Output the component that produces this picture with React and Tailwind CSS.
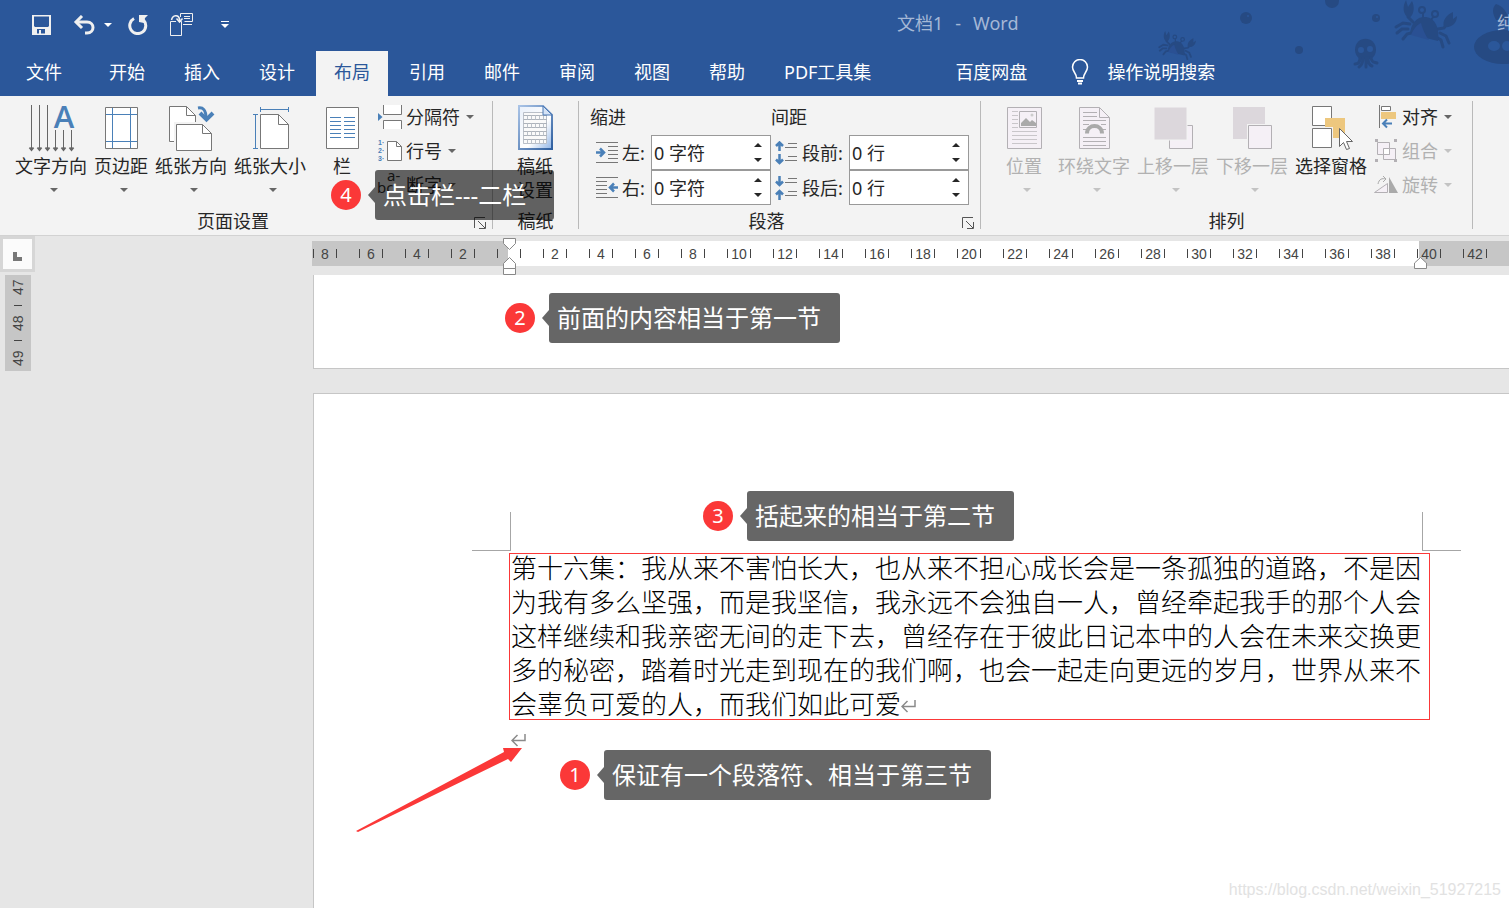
import React, { useState } from "react";

const TABS = [
  "开始",
  "插入",
  "设计",
  "布局",
  "引用",
  "邮件",
  "审阅",
  "视图",
  "帮助",
  "PDF工具集",
];

const RULER = [8, 6, 4, 2, 0];
for (let n = 2; n <= 42; n += 2) RULER.push(n);

const Caret = ({ className = "" }) => (
  <svg width="8" height="4" viewBox="0 0 8 4" className={className}>
    <path d="M0 0h8L4 4z" fill="currentColor" />
  </svg>
);

const Crab = ({ transform }) => (
  <g transform={transform}>
    <g fill="none" stroke="#264a83" strokeWidth="3" strokeLinecap="round">
      <path d="M16 24l-7-1-7 4M14 29l-6 0-5 4M17 33l-4 1-4 5" />
      <path d="M42 37l5 3 2 7M46 33l6 3 3 7M44 29l6-1 4-6M19 22l-5-5" />
      <path d="M29 18v-5M37 20l3-4" strokeWidth="2" />
    </g>
    <path d="M16 34c1-12 8-18 16-17 9 1 14 11 12 24z" fill="#264a83" />
    <path d="M17 35c3-7 6-10 10-12 2 7 4 12 8 17z" fill="#2a5093" />
    <path
      d="M15 18c-6-3-7-11-3-18l2 7 4-6c3 6 2 14-3 17zM50 27c-2-6 2-12 9-15l0 7 4-3c0 7-5 12-13 11z"
      fill="#264a83"
    />
    <circle cx="28" cy="10" r="3" fill="#2b579a" stroke="#264a83" strokeWidth="2" />
    <circle cx="41" cy="14" r="3" fill="#2b579a" stroke="#264a83" strokeWidth="2" />
  </g>
);

const SeaPattern = () => (
  <svg
    className="absolute right-0 top-0"
    width="360"
    height="96"
    viewBox="0 0 360 96"
    aria-hidden="true"
  >
    <g fill="#264a83">
      <circle cx="97" cy="18" r="6" />
      <circle cx="183" cy="1" r="7" />
      <circle cx="227" cy="18" r="4" />
      <circle cx="150" cy="50" r="4" />
      <path d="M206 50c0-15 21-15 21 0 0 4-2 7-5 9h-11c-3-2-5-5-5-9z" />
      <path
        d="M211 58c0 5-3 6-5 6M214 58c0 5-1 7-4 9M217 58v9M219 58c0 5 1 7 4 8M222 58c1 5 3 4 6 5"
        fill="none"
        stroke="#264a83"
        strokeWidth="3"
        strokeLinecap="round"
      />
      <ellipse cx="354" cy="47" rx="29" ry="17" />
      <path d="M347 20c-4-7-4-12 0-16 7 2 11 8 13 16z" />
    </g>
    <g fill="#2b579a">
      <circle cx="99" cy="16" r="1" />
      <circle cx="228" cy="17" r="1" />
      <circle cx="212" cy="50" r="3" />
      <circle cx="221" cy="49" r="3" />
      <ellipse cx="345" cy="46" rx="6" ry="5" />
      <ellipse cx="358" cy="46" rx="5" ry="5" />
    </g>
    <Crab transform="translate(245 0)" />
    <Crab transform="translate(9 31) scale(.6)" />
  </svg>
);

const TextDirectionIcon = () => (
  <svg
    width="46"
    height="46"
    viewBox="0 0 46 46"
    fill="none"
    stroke="#666"
    className="overflow-visible"
  >
    <path d="M2.5 0v45M10.5 0v45M18.5 0v45M26.5 25v20M34.5 25v20M42.5 25v20" />
    <path
      d="M.5 42.500l2 2.500 2-2.500M8.500 42.500l2 2.500 2-2.500M16.500 42.500l2 2.500 2-2.500M24.500 42.500l2 2.500 2-2.500M32.500 42.500l2 2.500 2-2.500M40.500 42.500l2 2.500 2-2.500"
      strokeWidth="2"
    />
    <text
      x="35"
      y="23"
      textAnchor="middle"
      fontSize="31"
      fontWeight="600"
      fontFamily="Open Sans, sans-serif"
      fill="#4a80b8"
      stroke="none"
    >
      A
    </text>
  </svg>
);

const MarginsIcon = () => (
  <svg width="34" height="46" viewBox="0 0 34 46">
    <path d="M.5 2.500h32v41H.5z" fill="#fff" stroke="#777" />
    <path d="M7.500 3v40M25.500 3v40M1 9.500h31M1 36.500h31" stroke="#4a80b8" />
  </svg>
);

const OrientationIcon = () => (
  <svg width="46" height="46" viewBox="0 0 46 46">
    <path d="M.5 37.500V1.500h17l9 9v27z" fill="#fff" />
    <path d="M6 36.500H.5V1.500h17l9 9V18M17.500 1.500v9h9" fill="none" stroke="#777" />
    <path d="M5 17h30v29H5z" fill="#f3f3f3" />
    <path d="M7.500 19.500h26l9 9v17h-35z" fill="#fff" stroke="#777" />
    <path d="M33.500 19.500v9h9" fill="none" stroke="#777" />
    <g fill="none" stroke="#4a80b8">
      <path d="M29 3c5-1 8 2 8 10" strokeWidth="3" />
      <path d="M31 8l6.500 6.500L44 8" strokeWidth="4" />
    </g>
  </svg>
);

const SizeIcon = () => (
  <svg width="37" height="46" viewBox="0 0 37 46" fill="none">
    <path d="M7.500 9.500h18l10 10v24h-28z" fill="#fff" stroke="#777" />
    <path d="M25.500 9.500v10h10" stroke="#777" />
    <path
      d="M7.500 4.500h28M7.500 2v5M35.500 2v5M2.500 9.500v34M0 9.500h5M0 43.500h5"
      stroke="#4a80b8"
    />
  </svg>
);

const ColumnsIcon = () => (
  <svg width="34" height="46" viewBox="0 0 34 46">
    <path d="M.5 2.500h32v41H.5z" fill="#fff" stroke="#777" />
    <path
      d="M4 12.500h11M4 16.500h11M4 20.500h11M4 24.500h11M4 28.500h11M4 32.500h11M18 12.500h11M18 16.500h11M18 20.500h11M18 24.500h11M18 28.500h11M18 32.500h11"
      stroke="#4a80b8"
    />
  </svg>
);

const GridPaperIcon = () => (
  <svg width="36" height="46" viewBox="0 0 36 46">
    <defs>
      <linearGradient id="paper" x1="0" y1="0" x2="1" y2="1">
        <stop offset="0" stopColor="#e9f0fa" />
        <stop offset=".6" stopColor="#fff" />
        <stop offset="1" stopColor="#8fb4e6" />
      </linearGradient>
      <linearGradient id="paperEdge" x1="0" y1="0" x2="1" y2="1">
        <stop offset="0" stopColor="#a9c3e6" />
        <stop offset="1" stopColor="#2f5f9f" />
      </linearGradient>
    </defs>
    <path
      d="M1 1h24l9 9v34H1z"
      fill="url(#paper)"
      stroke="url(#paperEdge)"
      strokeWidth="2"
    />
    <path d="M5.500 7.500h23v31h-23z" fill="#fafafa" stroke="#b9bfc8" />
    <path
      d="M5 10.500h24M5 14.500h24M5 18.500h24M5 22.500h24M5 26.500h24M5 30.500h24M5 34.500h24"
      stroke="#adb3bb"
    />
    <path
      d="M5 12.500h24M5 20.500h24M5 28.500h24M5 36.500h24"
      stroke="#bcc2ca"
      strokeWidth="4"
      strokeDasharray="1 3"
    />
    <path d="M25 1v9h9z" fill="#d4e2f5" stroke="#4b78b4" />
  </svg>
);

const PositionIcon = () => (
  <svg width="36" height="46" viewBox="0 0 36 46" stroke="#b3b0b4">
    <path d="M.5 2.500h34v41H.5z" fill="#f5f0f6" />
    <path d="M12.500 6.500h17v16h-17z" fill="#f5f0f6" />
    <path d="M14 21v-3l5-5 4 4 2-2 4 3v3z" fill="#aaa" stroke="none" />
    <circle cx="25" cy="10" r="1.500" fill="#ccc" stroke="none" />
    <path
      d="M5 6.500h6M5 10.500h6M5 14.500h6M5 18.500h6M5 22.500h6M5 26.500h25M5 30.500h25M5 34.500h25M5 38.500h25"
      stroke="#c9c6ca"
    />
  </svg>
);

const WrapIcon = () => (
  <svg width="32" height="46" viewBox="0 0 32 46" stroke="#b3b0b4" fill="none">
    <path d="M.5 2.500h20l10 10v31H.5z" fill="#f5f0f6" />
    <path d="M20.500 2.500v10h10" />
    <path d="M4 7.500h14M4 11.500h14M4 15.500h23M4 19.500h6M22 19.500h5M4 24.500h4M24 24.500h3M4 32.500h23M4 36.500h23M4 40.500h23" />
    <path d="M8 28.500c0-10 15-10 15 0" stroke="#aaa" strokeWidth="4" />
  </svg>
);

const ForwardIcon = () => (
  <svg width="40" height="46" viewBox="0 0 40 46">
    <path d="M15.500 20.500h23v23h-23z" fill="#f5f0f6" stroke="#b3b0b4" />
    <path d="M0 2h33v33H0z" fill="#dcd7dc" stroke="#f3f3f3" />
  </svg>
);

const BackwardIcon = () => (
  <svg width="40" height="46" viewBox="0 0 40 46">
    <path d="M0 2h32v32H0z" fill="#dcd7dc" />
    <path d="M14 19h26v26H14z" fill="#f3f3f3" />
    <path d="M15.500 20.500h23v23h-23z" fill="#f5f0f6" stroke="#b3b0b4" />
  </svg>
);

const SelectionIcon = () => (
  <svg width="42" height="46" viewBox="0 0 42 46">
    <path d="M1.500 1.500h19v19h-19zM1.500 23.500h19v19h-19z" fill="#fff" stroke="#777" />
    <path d="M14 13h20v20H22V22h-8z" fill="#edc77e" />
    <path d="M28.500 23.500v18l4-4 3 7 3-1-3-7h6z" fill="#fff" stroke="#666" />
  </svg>
);

const BreaksIcon = () => (
  <svg width="24" height="24" viewBox="0 0 24 24">
    <path d="M0 8l4.500 4L0 16z" fill="#4a80b8" />
    <path d="M5.500 0v9.500h18V0M5.500 24v-8.500h18V24" fill="#fff" stroke="#777" />
  </svg>
);

const LineNumberIcon = () => (
  <svg width="24" height="24" viewBox="0 0 24 24" className="overflow-visible">
    <path d="M9.500 2.500h9l5 5v14h-14z" fill="#fff" stroke="#777" />
    <path d="M18.500 2.500v5h5" fill="none" stroke="#777" />
    <g
      fontSize="7"
      fontWeight="700"
      fontFamily="Liberation Sans, sans-serif"
      fill="#4a80b8"
    >
      <text x="0" y="6">1·</text>
      <text x="0" y="14">2·</text>
      <text x="0" y="22">3·</text>
    </g>
  </svg>
);

const HyphenIcon = () => (
  <svg width="24" height="24" viewBox="0 0 24 24" className="overflow-visible">
    <g fontSize="15" fontFamily="Noto Sans, sans-serif" fill="#333">
      <text x="9" y="8">a-</text>
      <text x="-1" y="20">bc</text>
    </g>
  </svg>
);

const AlignIcon = () => (
  <svg width="24" height="24" viewBox="0 0 24 24">
    <path d="M5.500 0v23" stroke="#777" />
    <path d="M7.500 1.500h9v4h-9z" fill="#fff" stroke="#777" />
    <path d="M7 7h15v7H7z" fill="#edc77e" />
    <path d="M18 18.500h-9M13 14.500l-4 4 4 4" stroke="#4a80b8" strokeWidth="2" fill="none" />
  </svg>
);

const GroupIcon = () => (
  <svg width="24" height="24" viewBox="0 0 24 24" stroke="#b3b0b4">
    <path d="M3.500 3.500h12v12h-12zM9.500 9.500h12v11h-12z" fill="#f5f0f6" />
    <path d="M9.500 9.500h6v6h-6z" fill="#fff" />
    <path
      d="M1 0h3v3H1zM20 0h3v3h-3zM1 20h3v3H1zM20 20h3v3h-3z"
      fill="#b3b0b4"
      stroke="none"
    />
  </svg>
);

const RotateIcon = () => (
  <svg width="24" height="24" viewBox="0 0 24 24">
    <path d="M.5 19.500h13v-9z" fill="#f5f0f6" stroke="#b3b0b4" />
    <path d="M15 4v16h9z" fill="#aaa" />
    <path d="M4 11c1-5 4-6 8-5M9 3l3 3-3 3" fill="none" stroke="#aaa" />
  </svg>
);

const INDENT_PATHS = {
  left: {
    lines: "M0 1.500h22M12 5.500h10M12 9.500h10M12 13.500h10M12 17.500h10M0 21.500h22",
    arrow: "M0 11.500h7M4 7.500l4 4-4 4",
  },
  right: {
    lines: "M0 1.500h22M0 5.500h11M0 9.500h11M0 13.500h11M0 17.500h11M0 21.500h22",
    arrow: "M22 11.500h-7M18 7.500l-4 4 4 4",
  },
  before: {
    lines: "M13 2.500h9M10 6.500h12M13 15.500h9M10 19.500h12",
    arrow: "M4.500 10V2M1 5l3.500-3.500L8 5M4.500 13v9M1 18.500l3.500 3.500L8 18.500",
  },
  after: {
    lines: "M13 2.500h9M10 6.500h12M13 15.500h9M10 19.500h12",
    arrow: "M4.500 0v9M1 5.500l3.500 3.500L8 5.500M4.500 24v-9M1 18.500l3.500-3.500L8 18.500",
  },
};

const Launcher = ({ label }) => (
  <button aria-label={label} className="flex w-[26px] items-center pt-[3px] pl-2">
    <svg width="12" height="12" viewBox="0 0 12 12" fill="none" stroke="#555">
      <path d="M.5 11V.5H11M4 4l7 7M11.500 5v6.500H5" />
    </svg>
  </button>
);

const BigButton = ({ icon, label, caret = true, disabled, className = "" }) => (
  <button
    disabled={disabled}
    className={`flex flex-col items-center pt-[5px] ${
      disabled ? "text-[#b1b1b1]" : "text-[#262626]"
    } ${className}`}
  >
    <span className="ml-0.5 h-[46px]">{icon}</span>
    <span className="mt-[3px] leading-6 whitespace-pre-line">{label}</span>
    {caret && (
      <Caret
        className={`mt-[10px] ml-[6px] ${
          disabled ? "text-[#c3c3c3]" : "text-[#666]"
        }`}
      />
    )}
  </button>
);

const SmallButton = ({ icon, label, disabled }) => (
  <button
    disabled={disabled}
    className={`flex h-[34px] items-center ${
      disabled ? "text-[#b1b1b1]" : "text-[#262626]"
    }`}
  >
    {icon}
    <span className="ml-1">{label}</span>
    <Caret
      className={`ml-[6px] ${disabled ? "text-[#c3c3c3]" : "text-[#666]"}`}
    />
  </button>
);

const Group = ({ label, launcher, className = "", children }) => (
  <>
    <section className="flex h-[139px] shrink-0 flex-col pt-1 pb-1">
      <div className={`flex items-start ${className}`}>{children}</div>
      <div className="mt-auto flex h-5">
        <h2 className="flex-1 text-center leading-5">{label}</h2>
        {launcher && <Launcher label={`${label}设置`} />}
      </div>
    </section>
    <div className="mt-[5px] h-32 w-px shrink-0 bg-[#b9b9b9]"></div>
  </>
);

const Spinner = ({ id, kind, label, unit, labelClass }) => {
  const [value, setValue] = useState(0);
  return (
    <div className="flex h-[35px] items-center">
      <svg width="22" height="24" viewBox="0 0 22 24" fill="none">
        <path d={INDENT_PATHS[kind].lines} stroke="#777" />
        <path d={INDENT_PATHS[kind].arrow} stroke="#4a80b8" strokeWidth="2.500" />
      </svg>
      <label htmlFor={id} className={labelClass}>
        {label}
      </label>
      <div className="flex h-full w-[120px] border border-[#999] bg-white">
        <input
          id={id}
          readOnly
          value={`${value} ${unit}`}
          className="w-0 flex-1 pl-0.5 outline-none"
        />
        <div className="flex w-6 flex-col justify-center gap-[11px]">
          <button
            aria-label={`${label}增加`}
            onClick={() => setValue(value + 1)}
            className="flex justify-center"
          >
            <Caret className="rotate-180" />
          </button>
          <button
            aria-label={`${label}减少`}
            onClick={() => setValue(Math.max(0, value - 1))}
            className="flex justify-center"
          >
            <Caret />
          </button>
        </div>
      </div>
    </div>
  );
};

// numbered badge with a speech bubble next to it
const Callout = ({ number, text, className }) => (
  <div className={`absolute flex items-center ${className}`}>
    <span className="flex size-[30px] items-center justify-center rounded-full bg-[#fb3838] text-xl leading-none text-white">
      {number}
    </span>
    <svg width="7" height="16" viewBox="0 0 7 16" className="ml-[7px]">
      <path d="M7 0v16L0 8z" fill="#000" fillOpacity=".6" />
    </svg>
    <span className="flex h-[50px] min-w-[179px] items-center rounded-[3px] bg-black/60 pr-[19px] pl-2 text-2xl whitespace-nowrap text-white">
      {text}
    </span>
  </div>
);

const ParagraphMark = () => (
  <svg
    width="15"
    height="14"
    viewBox="0 0 15 14"
    fill="none"
    stroke="#8a8a8a"
    strokeWidth="1.500"
    className="inline"
  >
    <path d="M14 0v6.500H1M6.500 1L1 6.500l5.500 5.500" />
  </svg>
);

const App = () => {
  const [active, setActive] = useState("布局");
  return (
    <div className="relative flex min-h-screen flex-col overflow-hidden bg-[#e6e6e6] font-['Noto_Sans','Noto_Sans_CJK_SC',sans-serif] text-lg text-[#262626]">
      <header className="relative bg-[#2b579a] text-white">
        <SeaPattern />
        <div className="relative flex h-[51px] items-center overflow-hidden pb-0.5">
          <div className="flex w-[897px] shrink-0 items-center pl-8">
            <button aria-label="保存">
              <svg width="19" height="20" viewBox="0 0 19 20">
                <path
                  fillRule="evenodd"
                  d="M0 0h19v20H0zM2 1.500v9.500l1 1h13l1-1v-9.500zM5 14v4.500h2V15h2v3.500h4V14z"
                  fill="#f0f0f0"
                />
              </svg>
            </button>
            <button aria-label="撤消" className="ml-[22px]">
              <svg width="22" height="20" viewBox="0 0 22 20" fill="none" stroke="#f0f0f0">
                <path d="M3 7h11c8 0 8 11 0 11h-2" strokeWidth="3" />
                <path d="M9 1L3 7l6 6" strokeWidth="3" />
              </svg>
            </button>
            <button aria-label="撤消选项" className="ml-[9px]">
              <Caret />
            </button>
            <button aria-label="重做" className="ml-4">
              <svg width="20" height="20" viewBox="0 0 20 20" fill="none" stroke="#f0f0f0">
                <path d="M6 3.500a8 8 0 1 0 9.500 1.500" strokeWidth="3" />
                <path d="M11 0h9l-3 3-1 5-5-1z" fill="#f0f0f0" stroke="none" />
              </svg>
            </button>
            <button aria-label="粘贴到新文档" className="ml-[22px]">
              <svg width="23" height="23" viewBox="0 0 23 23" fill="none" stroke="#f0f0f0">
                <path d="M6 8.500H.5v14h11v-14H10" />
                <path d="M1.500 7c1-5 7-6 8-1v3M6.500 5.500l3 3.500 3-3.500" strokeWidth="1.500" />
                <path d="M10.500 4V.5h12v8h-8M14 3.500h6M14 5.500h6M13 11.500h9" />
              </svg>
            </button>
            <button aria-label="自定义快速访问工具栏" className="ml-7">
              <svg width="8" height="8" viewBox="0 0 8 8" fill="#fff">
                <path d="M0 0h8v1H0zM0 3h8L4 7z" />
              </svg>
            </button>
          </div>
          <h1 className="flex shrink-0 gap-3 pb-1 text-[#a5b8d6]">
            <span>文档1</span>
            <span>-</span>
            <span>Word</span>
          </h1>
          <span className="ml-auto w-3 pb-1 whitespace-nowrap text-[#a5b8d6]">
            纯
          </span>
        </div>
        <nav className="relative flex h-[45px] items-stretch gap-[3px] whitespace-nowrap">
          <button className="w-[88px] pb-[3px]">文件</button>
          {TABS.map((tab) => (
            <button
              key={tab}
              onClick={() => setActive(tab)}
              className={`px-[18px] pb-[3px] ${
                tab === active ? "bg-[#f3f3f3] text-[#2b579a]" : ""
              }`}
            >
              {tab}
            </button>
          ))}
          <button className="ml-[45px] px-[18px] pb-[3px]">百度网盘</button>
          <button className="ml-[23px] flex items-center gap-[18px] pb-[3px]">
            <svg width="18" height="26" viewBox="0 0 18 26" fill="none" stroke="#fff">
              <path
                d="M5.500 19c0-5-4-6-4-11a7.500 7.500 0 0 1 15 0c0 5-4 6-4 11z"
                strokeWidth="1.500"
              />
              <path d="M6 22h6M7 24.500h4" strokeWidth="2" />
            </svg>
            操作说明搜索
          </button>
        </nav>
      </header>

      <div className="flex border-b border-[#d2d2d2] bg-[#f3f3f3]">
        <Group label="页面设置" launcher className="gap-[7px] pr-[18px] pl-[15px]">
          <BigButton icon={<TextDirectionIcon />} label="文字方向" />
          <BigButton icon={<MarginsIcon />} label="页边距" />
          <BigButton icon={<OrientationIcon />} label="纸张方向" />
          <BigButton icon={<SizeIcon />} label="纸张大小" />
          <BigButton icon={<ColumnsIcon />} label="栏" className="w-[58px]" />
          <div>
            <SmallButton icon={<BreaksIcon />} label="分隔符" />
            <SmallButton icon={<LineNumberIcon />} label="行号" />
            <SmallButton icon={<HyphenIcon />} label="断字" />
          </div>
        </Group>
        <Group label="稿纸" className="pr-6 pl-[23px]">
          <BigButton icon={<GridPaperIcon />} label={"稿纸\n设置"} caret={false} />
        </Group>
        <Group label="段落" launcher className="px-[11px]">
          <div>
            <h3 className="h-[35px] leading-[34px]">缩进</h3>
            <div className="pl-[6px]">
              <Spinner
                id="indent-left"
                kind="left"
                label="左:"
                unit="字符"
                labelClass="w-[33px] pl-1"
              />
              <Spinner
                id="indent-right"
                kind="right"
                label="右:"
                unit="字符"
                labelClass="w-[33px] pl-1"
              />
            </div>
          </div>
          <div>
            <h3 className="h-[35px] leading-[34px]">间距</h3>
            <div className="pl-1">
              <Spinner
                id="space-before"
                kind="before"
                label="段前:"
                unit="行"
                labelClass="w-[52px] pl-[5px]"
              />
              <Spinner
                id="space-after"
                kind="after"
                label="段后:"
                unit="行"
                labelClass="w-[52px] pl-[5px]"
              />
            </div>
          </div>
        </Group>
        <Group label="排列" className="gap-[7px] pr-5 pl-6">
          <BigButton icon={<PositionIcon />} label="位置" disabled className="mr-2" />
          <BigButton icon={<WrapIcon />} label="环绕文字" disabled />
          <BigButton icon={<ForwardIcon />} label="上移一层" disabled />
          <BigButton icon={<BackwardIcon />} label="下移一层" disabled />
          <BigButton icon={<SelectionIcon />} label="选择窗格" caret={false} />
          <div>
            <SmallButton icon={<AlignIcon />} label="对齐" />
            <SmallButton icon={<GroupIcon />} label="组合" disabled />
            <SmallButton icon={<RotateIcon />} label="旋转" disabled />
          </div>
        </Group>
      </div>

      <main className="flex flex-1">
        {/* left gutter: tab selector and vertical ruler */}
        <div className="w-[312px] shrink-0 font-['Liberation_Sans',sans-serif] text-sm text-[#444]">
          <button
            aria-label="制表符"
            className="flex h-9 w-[35px] items-center justify-center border-[3px] border-[#d6d6d6] bg-[#fbfbfb] pt-1"
          >
            <span className="size-[9px] border-b-4 border-l-4 border-[#777]"></span>
          </button>
          <div className="mt-[3px] ml-[5px] flex h-24 w-[26px] rotate-180 items-center justify-around bg-[#c6c6c6] leading-[26px] [writing-mode:vertical-rl]">
            <span>49</span>
            <span className="h-px w-2 bg-[#444]"></span>
            <span>48</span>
            <span className="h-px w-2 bg-[#444]"></span>
            <span>47</span>
          </div>
        </div>

        <div className="flex min-w-0 flex-1 flex-col">
          <div className="relative mt-[5px] h-[25px] bg-[linear-gradient(to_right,#c6c6c6_196px,#fff_196px,#fff_1107px,#c6c6c6_1107px)] pl-px font-['Liberation_Sans',sans-serif] text-sm text-[#444]">
            <div className="flex h-full w-full">
              {RULER.map((n, i) => (
                <div key={i} className="w-[46px] shrink-0 last:w-6">
                  {/* odd marks either side of each even number */}
                  <div className="flex h-full w-6 items-center justify-between">
                    <span className="h-[9px] w-px bg-[#444]"></span>
                    {n > 0 && <span>{n}</span>}
                    <span className="h-[9px] w-px bg-[#444]"></span>
                  </div>
                </div>
              ))}
            </div>
            <svg
              width="14"
              height="38"
              viewBox="0 0 14 38"
              className="absolute -top-[3px] left-[191px]"
              fill="#fff"
              stroke="#888"
            >
              <path d="M.5.500h12v5l-6 6-6-6zM.5 25.500l6-6 6 6v5H.5zM.5 30.500h12v6H.5z" />
            </svg>
            <svg
              width="14"
              height="12"
              viewBox="0 0 14 12"
              className="absolute top-4 left-[1102px]"
              fill="#fff"
              stroke="#888"
            >
              <path d="M.5 6l6-5.500 6 5.500v5.500H.5z" />
            </svg>
          </div>

          <div className="mt-[9px] ml-px h-[94px] border-b border-l border-[#c6c6c6] bg-white"></div>

          <article className="mt-6 ml-px flex-1 border-t border-l border-[#c6c6c6] bg-white pt-[118px] pb-10">
            <div className="ml-[158px] flex w-[989px] justify-between">
              <div className="size-[39px] border-r border-b border-[#a6a6a6]"></div>
              <div className="size-[39px] border-b border-l border-[#a6a6a6]"></div>
            </div>
            <div className="relative ml-[197px] w-[912px] text-[26px] leading-[34px] font-light text-black">
              <p>
                第十六集：我从来不害怕长大，也从来不担心成长会是一条孤独的道路，不是因为我有多么坚强，而是我坚信，我永远不会独自一人，曾经牵起我手的那个人会这样继续和我亲密无间的走下去，曾经存在于彼此日记本中的人会在未来交换更多的秘密，踏着时光走到现在的我们啊，也会一起走向更远的岁月，世界从来不会辜负可爱的人，而我们如此可爱
                <ParagraphMark />
              </p>
              <p>
                <ParagraphMark />
              </p>
              <div className="absolute top-0.5 -left-0.5 h-[167px] w-[921px] border border-[#fb3838]"></div>
            </div>
          </article>
        </div>
      </main>

      {/* annotations on top of the window */}
      <Callout number="4" text="点击栏---二栏" className="top-[170px] left-[331px]" />
      <Callout
        number="2"
        text="前面的内容相当于第一节"
        className="top-[293px] left-[505px]"
      />
      <Callout
        number="3"
        text="括起来的相当于第二节"
        className="top-[491px] left-[703px]"
      />
      <Callout
        number="1"
        text="保证有一个段落符、相当于第三节"
        className="top-[750px] left-[560px]"
      />
      <svg
        width="166"
        height="86"
        viewBox="0 0 166 86"
        className="absolute top-[747px] left-[356px]"
      >
        <path d="M0 84L148 5l-1-4h19l-11 14-3-3L2 85z" fill="#fb3838" />
      </svg>
      <span className="absolute right-2 bottom-[6px] font-['Liberation_Sans',sans-serif] text-base text-[#e2e2e2]">
        https://blog.csdn.net/weixin_51927215
      </span>
    </div>
  );
};

export default App;
